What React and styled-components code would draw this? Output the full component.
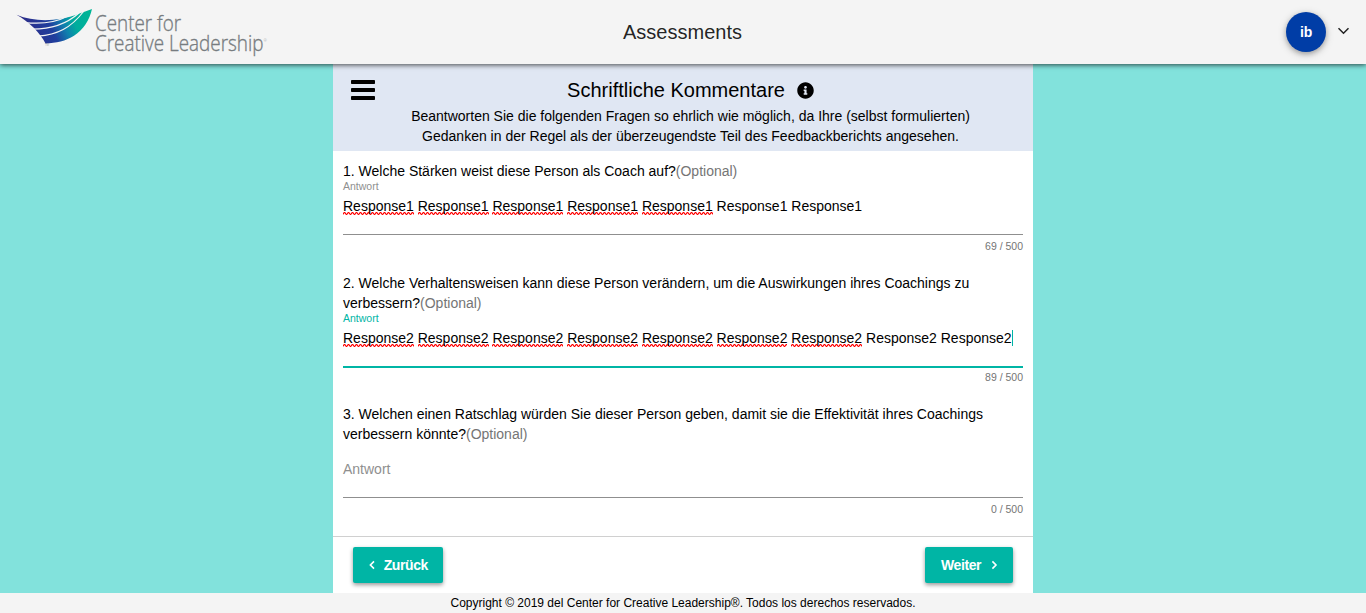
import React from "react";
import styled, { createGlobalStyle } from "styled-components";
import { FaInfoCircle } from "react-icons/fa";

const GlobalStyle = createGlobalStyle`
  * { box-sizing: border-box; }
  body {
    margin: 0;
    background: #82e2dc;
    color: #000;
    font-family: "Liberation Sans", Arial, sans-serif;
    font-size: 14px;
    line-height: 20px;
  }
`;

const Page = styled.div`
  height: 613px;
  display: flex;
  flex-direction: column;
  overflow: hidden;
`;

const TopBar = styled.header`
  position: relative;
  z-index: 1;
  flex: none;
  height: 64px;
  display: grid;
  grid-template-columns: 1fr auto 1fr;
  align-items: center;
  padding: 0 16px;
  background: #f4f4f4;
  box-shadow: 0 1px 5px rgba(0, 0, 0, 0.7);
`;

const Logo = styled.svg`
  display: block;
  width: 252px;
  height: 64px;
  overflow: visible;
`;

const LogoText = styled.text`
  font-family: "Open Sans", sans-serif;
  font-weight: 300;
  font-size: ${(p) => p.$size || 22}px;
  fill: #777c80;
  stroke: #777c80;
  stroke-width: ${(p) => (p.$size ? 0 : 0.35)}px;
`;

const AppTitle = styled.div`
  padding-right: 1px;
  font-size: 20px;
  color: rgba(0, 0, 0, 0.87);
`;

const UserMenu = styled.div`
  display: flex;
  justify-content: flex-end;
  align-items: center;
  gap: 11px;
`;

const Chevron = styled.svg`
  margin-bottom: 2px;
`;

const Avatar = styled.div`
  width: 40px;
  height: 40px;
  display: flex;
  align-items: center;
  justify-content: center;
  border-radius: 50%;
  background: #003da6;
  color: #fff;
  font-weight: bold;
  letter-spacing: -0.3px;
  box-shadow: 0 2px 5px rgba(0, 0, 0, 0.26), 0 2px 10px rgba(0, 0, 0, 0.16);
`;

const Panel = styled.main`
  flex: 1;
  width: 700px;
  margin: 0 auto;
  display: flex;
  flex-direction: column;
  background: #fff;
`;

const PanelHead = styled.div`
  flex: none;
  height: 87px;
  display: grid;
  grid-template-columns: 24px 1fr;
  padding: 16px 0 0 18px;
  background: #e0e7f3;
`;

const PanelIntro = styled.div`
  padding-right: 27px;
  text-align: center;
`;

const PanelTitle = styled.h1`
  display: flex;
  justify-content: center;
  align-items: center;
  gap: 12px;
  margin: 0 0 6px;
  font-size: 20px;
  font-weight: normal;
  line-height: 20px;
`;

const Questions = styled.div`
  flex: 1;
  padding: 10px 10px 0;
`;

const Question = styled.section`
  height: ${(p) => p.$height}px;
`;

const Optional = styled.span`
  color: #757575;
`;

const FieldLabel = styled.div`
  height: 12px;
  font-size: 10.5px;
  line-height: 11px;
  color: ${(p) => (p.$active ? "#00b5a5" : "#8f8f8f")};
`;

const Field = styled.div`
  height: ${(p) => (p.$active ? 43 : 42)}px;
  padding-top: 3px;
  white-space: nowrap;
  color: ${(p) => (p.$empty ? "#8f8f8f" : "#000")};
  border-bottom: ${(p) => (p.$active ? "2px solid #00b5a5" : "1px solid #8f8f8f")};
`;

/* Red zigzag of the spelling checker, three pixel rows repeated every 4px */
const Misspelled = styled.span`
  padding-bottom: 1px;
  background-image:
    linear-gradient(90deg, #ff8080 0 1px, #f00 1px 2px, #ff8080 2px 3px, transparent 3px),
    linear-gradient(90deg, #f00 0 1px, #ff9a9a 1px 2px, #f00 2px 3px, #ff9a9a 3px),
    linear-gradient(90deg, #ff9a9a 0 1px, transparent 1px 2px, #ff9a9a 2px 3px, #f00 3px);
  background-size: 4px 1px;
  background-repeat: repeat-x;
  background-position: 0 calc(100% - 2px), 0 calc(100% - 1px), 0 100%;
`;

const Caret = styled.span`
  display: inline-block;
  width: 1px;
  height: 16px;
  vertical-align: -3px;
  background: #00b5a5;
`;

const Counter = styled.div`
  padding-top: ${(p) => (p.$active ? 3 : 5)}px;
  font-size: 10.5px;
  line-height: 12px;
  text-align: right;
  color: #757575;
`;

const Actions = styled.div`
  flex: none;
  height: 57px;
  display: flex;
  justify-content: space-between;
  padding: 10px 20px 0;
  border-top: 1px solid #d0d0d0;
`;

const Button = styled.button`
  width: ${(p) => p.$width}px;
  height: 36px;
  display: flex;
  align-items: center;
  justify-content: space-between;
  padding: 0 15px 0 16px;
  border: 0;
  border-radius: 2px;
  background: #00b5a5;
  color: #fff;
  font: bold 14px "Liberation Sans", Arial, sans-serif;
  letter-spacing: -0.4px;
  box-shadow: 0 2px 4px rgba(0, 0, 0, 0.4);
`;

const Footer = styled.footer`
  flex: none;
  height: 20px;
  font-size: 12px;
  line-height: 20px;
  text-align: center;
  background: #f4f4f4;
`;

const Squiggled = ({ word, marked, plain }) => (
  <>
    {Array.from({ length: marked }, (_, i) => (
      <React.Fragment key={i}>
        <Misspelled>{word}</Misspelled>{" "}
      </React.Fragment>
    ))}
    {Array(plain).fill(word).join(" ")}
  </>
);

const BrandLogo = () => (
  <Logo viewBox="16 0 252 64">
    <defs>
      <linearGradient id="wing" x1="0" x2="1" y1="0.2" y2="0">
        <stop offset="0" stopColor="#2e2a86" />
        <stop offset="0.38" stopColor="#203f9e" />
        <stop offset="0.55" stopColor="#107fae" />
        <stop offset="0.7" stopColor="#00ac9d" />
        <stop offset="1" stopColor="#00b795" />
      </linearGradient>
    </defs>
    <path
      d="M16.5 14.8C30 20.5 46 21.5 61 18.8C74 16.3 83 12 92 9C89.5 20 83.5 29.5 74 35.8C66 41 56 43.2 45.5 43.4C40.5 33.5 29 21.5 16.5 14.8Z"
      fill="url(#wing)"
    />
    <g fill="none" stroke="#f4f4f4" strokeWidth="1.2">
      <path d="M25 22.6C41 24.3 56 22.2 67 16.5" />
      <path d="M31.5 29.2C51 29.4 66 24.5 79 13" />
      <path d="M38 36.2C57 34.8 71 28 83.5 11.5" />
    </g>
    <LogoText $size={3} x="45" y="46">TM</LogoText>
    <LogoText x="95" y="31" textLength="86" lengthAdjust="spacingAndGlyphs">Center for</LogoText>
    <LogoText x="95" y="50.5" textLength="168.5" lengthAdjust="spacingAndGlyphs">Creative Leadership</LogoText>
    <LogoText $size={4} x="263.6" y="42">®</LogoText>
  </Logo>
);

export default function App() {
  return (
    <Page>
      <GlobalStyle />
      <TopBar>
        <BrandLogo />
        <AppTitle>Assessments</AppTitle>
        <UserMenu>
          <Avatar>ib</Avatar>
          <Chevron width="13" height="8" viewBox="0 0 13 8" fill="none" stroke="#222" strokeWidth="1.5">
            <path d="M1.5 1.3L6.5 6.3L11.5 1.3" />
          </Chevron>
        </UserMenu>
      </TopBar>
      <Panel>
        <PanelHead>
          <svg width="24" height="20" viewBox="0 0 24 20">
            <rect width="24" height="4" rx="0.8" />
            <rect y="8" width="24" height="4" rx="0.8" />
            <rect y="16" width="24" height="4" rx="0.8" />
          </svg>
          <PanelIntro>
            <PanelTitle>
              Schriftliche Kommentare
              <FaInfoCircle size={17} />
            </PanelTitle>
            Beantworten Sie die folgenden Fragen so ehrlich wie möglich, da Ihre (selbst formulierten)
            <br />
            Gedanken in der Regel als der überzeugendste Teil des Feedbackberichts angesehen.
          </PanelIntro>
        </PanelHead>
        <Questions>
          <Question $height={112}>
            1. Welche Stärken weist diese Person als Coach auf?<Optional>(Optional)</Optional>
            <FieldLabel>Antwort</FieldLabel>
            <Field>
              <Squiggled word="Response1" marked={5} plain={2} />
            </Field>
            <Counter>69 / 500</Counter>
          </Question>
          <Question $height={131}>
            2. Welche Verhaltensweisen kann diese Person verändern, um die Auswirkungen ihres Coachings zu
            <br />
            verbessern?<Optional>(Optional)</Optional>
            <FieldLabel $active>Antwort</FieldLabel>
            <Field $active>
              <Squiggled word="Response2" marked={7} plain={2} />
              <Caret />
            </Field>
            <Counter $active>89 / 500</Counter>
          </Question>
          <Question $height={131}>
            3. Welchen einen Ratschlag würden Sie dieser Person geben, damit sie die Effektivität ihres Coachings
            <br />
            verbessern könnte?<Optional>(Optional)</Optional>
            <FieldLabel />
            <Field $empty>Antwort</Field>
            <Counter>0 / 500</Counter>
          </Question>
        </Questions>
        <Actions>
          <Button $width={90}>
            <svg width="6" height="10" viewBox="0 0 6 10" fill="none" stroke="currentColor" strokeWidth="1.6">
              <path d="M5 1.4L1.4 5L5 8.6" />
            </svg>
            Zurück
          </Button>
          <Button $width={88}>
            Weiter
            <svg width="7" height="10" viewBox="0 0 7 10" fill="none" stroke="currentColor" strokeWidth="1.6">
              <path d="M1.4 1.4L5 5L1.4 8.6" />
            </svg>
          </Button>
        </Actions>
      </Panel>
      <Footer>Copyright © 2019 del Center for Creative Leadership®. Todos los derechos reservados.</Footer>
    </Page>
  );
}
